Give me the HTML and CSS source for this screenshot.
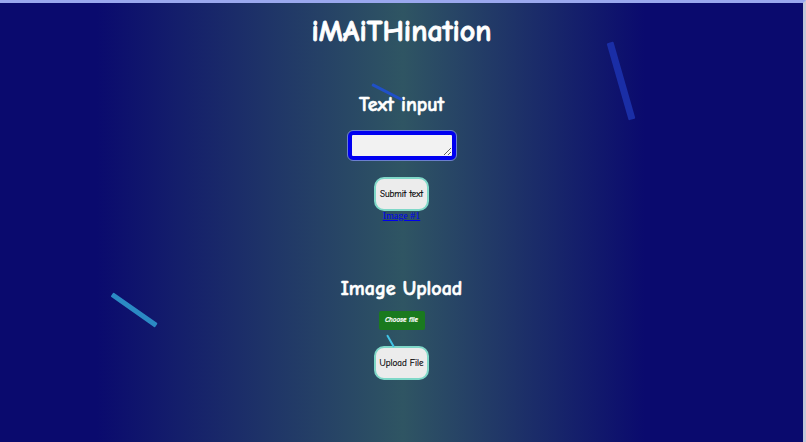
FILE: index.html
```html
<!DOCTYPE html>
<html lang="en">

<head>
    <meta charset="UTF-8">
    <meta name="viewport" content="width=device-width, initial-scale=1.0">
    <title>iMAiTHination</title>
    <link rel="stylesheet" href="styles.css">
</head>

<body>
    <!-- 背景の飾り線 -->
    <div class="streak streak-a"></div>
    <div class="streak streak-b"></div>
    <div class="streak streak-c"></div>
    <div class="streak streak-d"></div>

    <h1 class="title">iMAiTHination</h1>

    <!-- テキスト入力 -->
    <section class="panel">
        <h2>Text input</h2>
        <textarea id="text-input" class="text-box"></textarea>
        <button class="round-button">Submit text</button>
        <a href="#" class="image-link">Image #1</a>
    </section>

    <!-- 画像アップロード -->
    <section class="panel upload">
        <h2>Image Upload</h2>
        <label class="choose-file">Choose file<input type="file" hidden></label>
        <button class="round-button">Upload File</button>
    </section>
</body>

</html>
```

FILE: styles.css
```css
body,
html {
    margin: 0;
    padding: 0;
    overflow: hidden;
    width: 100%;
    height: 100%;
}

body {
    box-sizing: border-box;
    border-top: 3px solid #9aa8ee;
    border-right: 3px solid #c4c8d8;
    background: linear-gradient(90deg, #0a0a6e 12%, #2f5563 50%, #0a0a6e 80%);
    color: #fff;
    font-family: "Comic Sans MS", "Comic Neue", cursive;
    text-align: center;
    position: relative;
}

.title {
    margin: 0;
    padding-top: 10px;
    font-size: 30px;
    line-height: 38px;
    -webkit-text-stroke: 0.8px #fff;
}

.panel {
    display: flex;
    flex-direction: column;
    align-items: center;
}

.panel h2 {
    margin: 40px 0 12px;
    font-size: 20px;
    line-height: 28px;
    -webkit-text-stroke: 0.6px #fff;
}

.upload h2 {
    margin-top: 54px;
    margin-bottom: 8px;
}

.text-box {
    width: 96px;
    height: 17px;
    border: 4px solid #0000f0;
    border-radius: 5px;
    outline: 1px solid #6b7fd0;
    background-color: #f2f2f2;
    margin-bottom: 17px;
}

.round-button {
    font-family: inherit;
    font-size: 9px;
    width: 55px;
    height: 34px;
    padding: 0;
    background-color: #ececec;
    border: 2px solid #7fd8c8;
    border-radius: 10px;
    color: #000;
    -webkit-text-stroke: 0.2px #000;
    cursor: pointer;
}

.image-link {
    font-family: "Liberation Serif", serif;
    font-size: 10px;
    color: #0000ee;
    line-height: 10px;
}

.choose-file {
    font-size: 7px;
    font-style: italic;
    font-weight: bold;
    width: 46px;
    height: 19px;
    line-height: 19px;
    background-color: #1a7a1e;
    border-radius: 2px;
    margin-bottom: 16px;
    -webkit-text-stroke: 0.2px #fff;
    cursor: pointer;
}

/* 飾り線 */
.streak {
    position: absolute;
    transform-origin: 0 50%;
    border-radius: 1px;
}

.streak-a {
    left: 372px;
    top: 80px;
    width: 34px;
    height: 3px;
    background-color: #2050c8;
    transform: rotate(27deg);
}

.streak-b {
    left: 610px;
    top: 36px;
    width: 80px;
    height: 7px;
    background-color: #1a2ea6;
    transform: rotate(74deg);
}

.streak-c {
    left: 112px;
    top: 289px;
    width: 54px;
    height: 5px;
    background-color: #2b8ac4;
    transform: rotate(35deg);
}

.streak-d {
    left: 387px;
    top: 331px;
    width: 14px;
    height: 2px;
    background-color: #40c4e6;
    transform: rotate(60deg);
}
```
